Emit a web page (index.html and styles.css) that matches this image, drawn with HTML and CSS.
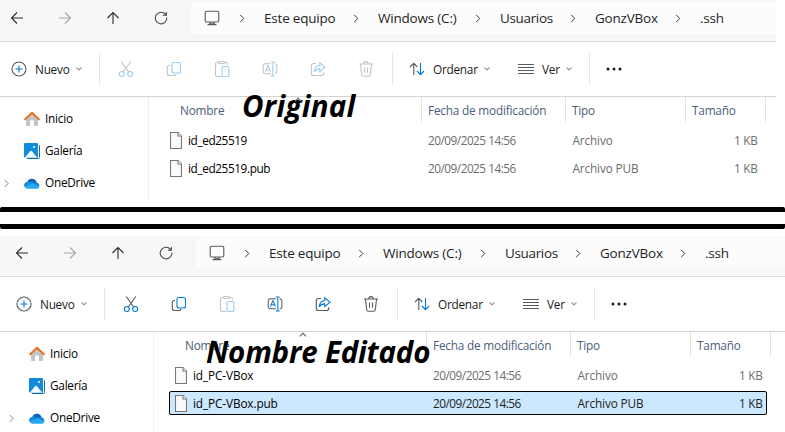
FILE: index.html
```
<!DOCTYPE html>
<html lang="es">
<head>
<meta charset="utf-8">
<title>Explorador</title>
<link rel="stylesheet" href="styles.css">
</head>
<body>
<svg class="defs" width="0" height="0">
  <symbol id="back" viewBox="0 0 16 16"><path d="M14 8H2.5M8 2.5 2.5 8 8 13.5"/></symbol>
  <symbol id="forward" viewBox="0 0 16 16"><path d="M2 8h11.5M8 2.5 13.500 8 8 13.500"/></symbol>
  <symbol id="up" viewBox="0 0 16 16"><path d="M8 14V2.500M2.500 8 8 2.500 13.500 8"/></symbol>
  <symbol id="reload" viewBox="0 0 16 16"><path d="M13.800 7.600A5.800 5.800 0 1 1 11.600 3.500L13.300 5M13.400 2v3.300H9.800"/></symbol>
  <symbol id="pc" viewBox="0 0 16 16"><rect x="1.200" y="1.200" width="13.600" height="10.800" rx="1.600"/><path d="M5.800 12v2.300M10.200 12v2.300M3.500 14.600h9M5.800 13.300h4.400"/></symbol>
  <symbol id="chev" viewBox="0 0 6 10"><path d="M1 1l4 4-4 4"/></symbol>
  <symbol id="down" viewBox="0 0 6 4"><path d="M.5.5 3 3 5.500.5"/></symbol>
  <symbol id="new" viewBox="0 0 16 16"><circle cx="8" cy="8" r="7"/><path class="c2" d="M8 4.500v7M4.500 8h7"/></symbol>
  <symbol id="cut" viewBox="0 0 16 18"><path d="M3.300 1.500 10.600 12M12.700 1.500 5.400 12"/><circle class="c2" cx="3.800" cy="14" r="2.500"/><circle class="c2" cx="12.200" cy="14" r="2.500"/></symbol>
  <symbol id="copy" viewBox="0 0 16 16"><path d="M4 4.500H3.300A2 2 0 0 0 1.300 6.500v6a2 2 0 0 0 2 2H8a2 2 0 0 0 2-1.700"/><rect class="c2" x="6" y="1.500" width="8.500" height="10.500" rx="2"/></symbol>
  <symbol id="paste" viewBox="0 0 16 18"><path d="M7 16.500H3a1.500 1.500 0 0 1-1.500-1.500V4A1.500 1.500 0 0 1 3 2.500h1.500M10.500 2.500H12A1.500 1.500 0 0 1 13.500 4v.8"/><rect x="4.500" y="1.500" width="6" height="2" rx="1"/><rect class="c2" x="8" y="6.500" width="6.800" height="10" rx="1.300"/></symbol>
  <symbol id="rename" viewBox="0 0 17 17"><path d="M9.500 3H3.500a2.200 2.200 0 0 0-2.200 2.200v6.100a2.200 2.200 0 0 0 2.200 2.200h6M13.500 3a2.200 2.200 0 0 1 2.300 2.200v6.100a2.200 2.200 0 0 1-2.300 2.200"/><path class="c2" d="M11.500 1v15M9.500 1h4M9.500 16h4M3.600 11.300l2.700-6.500L9 11.300M4.600 9.300H8"/></symbol>
  <symbol id="share" viewBox="0 0 16 16"><path d="M6 2.500H3.300a2 2 0 0 0-2 2v8a2 2 0 0 0 2 2h8.400a2 2 0 0 0 2-2v-1.300"/><path class="c2" d="M9.800 1.800v2.700C6.500 4.700 4.700 7 4.200 10.700 5.600 8.600 7.500 7.900 9.800 7.900v2.700L15 6.200z"/></symbol>
  <symbol id="trash" viewBox="0 0 16 17"><path d="M1 3.500h14M5.800 3.300a2.200 2.200 0 0 1 4.400 0M2.500 3.700l1.200 10.600a1.700 1.700 0 0 0 1.700 1.500h5.200a1.700 1.700 0 0 0 1.700-1.500L13.500 3.700M6.500 7v5.300M9.500 7v5.300"/></symbol>
  <symbol id="sort" viewBox="0 0 16 14"><path d="M4.800 13V1.500M1 5l3.800-3.700L8.300 5"/><path class="c2" d="M11.500 1v11.500M8 9l3.500 3.700L15 9"/></symbol>
  <symbol id="view" viewBox="0 0 16 12"><path d="M0 1.500h16M0 4.500h16M0 7.500h16M0 10.500h16"/></symbol>
  <symbol id="dots" viewBox="0 0 16 4"><g class="dot"><circle cx="2" cy="2" r="1.500"/><circle cx="8" cy="2" r="1.500"/><circle cx="14" cy="2" r="1.500"/></g></symbol>
  <symbol id="file" viewBox="0 0 12 17"><path fill="#fafafa" stroke="#777" d="M.5.5h7.500l3.500 3.500v12.500H.5z"/><path fill="#fff" stroke="#777" d="M8 .5V4h3.500"/></symbol>
  <symbol id="home" viewBox="0 0 16 16"><path fill="#c4c4c6" stroke="none" d="M2 7.500 8 2l6 5.500V14a1 1 0 0 1-1 1h-3V9.500H6V15H3a1 1 0 0 1-1-1z"/><path fill="none" stroke="#e8701d" stroke-width="2" stroke-linecap="round" stroke-linejoin="round" d="M1.200 8.200 8 1.700l6.800 6.500"/></symbol>
  <symbol id="gallery" viewBox="0 0 16 16"><path fill="#0a67b5" stroke="none" d="M13.500 2H15a1 1 0 0 1 1 1v10.500A2.500 2.500 0 0 1 13.500 16H4a1.500 1.500 0 0 1-1.400-1H13.500z"/><rect fill="#118bdc" stroke="none" width="14" height="14.500" rx="1.200"/><path fill="#f4faff" stroke="none" d="M1 14.500 6 8.300a1.300 1.300 0 0 1 2 0l5 6.200z"/><rect fill="#fff" stroke="none" x="9" y="3" width="2" height="2" rx="1"/><path stroke="#fff" d="M14.500 1.500V15"/></symbol>
  <symbol id="cloud" viewBox="0 0 16 11"><path fill="#0b63b8" stroke="none" d="M3.300 4A5 5 0 0 1 12.500 3.700L8 8z"/><path fill="#168de2" stroke="none" d="M3.500 3.700A3.600 3.600 0 0 0 .5 9L10 5.500C8 4 6 3.200 3.500 3.700z"/><path fill="#0b7bd3" stroke="none" d="M8.500 5.500a4 4 0 0 1 7 2L12 9z"/><path fill="#27a8ef" stroke="none" d="M.6 9A3.600 3.600 0 0 0 3.700 10.800h9A3.200 3.200 0 0 0 15.600 8.500L9.500 5z"/></symbol>
</svg>

<section class="window first">
  <nav class="nav">
    <svg class="i16"><use href="#back"/></svg><svg class="i16 faint"><use href="#forward"/></svg><svg class="i16"><use href="#up"/></svg><svg class="i16 soft"><use href="#reload"/></svg>
    <div class="address">
      <svg class="pc"><use href="#pc"/></svg><svg class="chev"><use href="#chev"/></svg>
      <span class="crumb c-pc">Este equipo</span><svg class="chev"><use href="#chev"/></svg>
      <span class="crumb c-drive">Windows (C:)</span><svg class="chev"><use href="#chev"/></svg>
      <span class="crumb c-users">Usuarios</span><svg class="chev"><use href="#chev"/></svg>
      <span class="crumb c-user">GonzVBox</span><svg class="chev"><use href="#chev"/></svg>
      <span class="crumb">.ssh</span>
    </div>
  </nav>
  <div class="toolbar">
    <div class="cmd new"><svg class="i16"><use href="#new"/></svg><span>Nuevo</span><svg class="down"><use href="#down"/></svg></div>
    <div class="actions">
      <svg class="off"><use href="#cut"/></svg><svg class="off"><use href="#copy"/></svg><svg class="off"><use href="#paste"/></svg><svg class="off"><use href="#rename"/></svg><svg class="off"><use href="#share"/></svg><svg class="off"><use href="#trash"/></svg>
    </div>
    <div class="cmd sort"><svg class="i16"><use href="#sort"/></svg><span>Ordenar</span><svg class="down"><use href="#down"/></svg></div>
    <div class="cmd view"><svg class="i16"><use href="#view"/></svg><span>Ver</span><svg class="down"><use href="#down"/></svg></div>
    <svg class="more"><use href="#dots"/></svg>
  </div>
  <div class="content">
    <aside class="side">
      <div><i></i><svg class="i16"><use href="#home"/></svg>Inicio</div>
      <div><i></i><svg class="i16"><use href="#gallery"/></svg>Galería</div>
      <div><svg class="expand"><use href="#chev"/></svg><svg class="cloud"><use href="#cloud"/></svg>OneDrive</div>
    </aside>
    <div class="files">
      <div class="head"><span class="name">Nombre</span><span>Fecha de modificación</span><span>Tipo</span><span>Tamaño</span></div>
      <div class="row"><svg class="file"><use href="#file"/></svg><span class="fname">id_ed25519</span><span class="date">20/09/2025 14:56</span><span class="type">Archivo</span><span class="size">1 KB</span></div>
      <div class="row"><svg class="file"><use href="#file"/></svg><span class="fname">id_ed25519.pub</span><span class="date">20/09/2025 14:56</span><span class="type">Archivo PUB</span><span class="size">1 KB</span></div>
    </div>
  </div>
  <div class="label original">Original</div>
  <svg class="caret"><use href="#down"/></svg>
</section>

<div class="rules"></div>

<section class="window second">
  <nav class="nav">
    <svg class="i16"><use href="#back"/></svg><svg class="i16 faint"><use href="#forward"/></svg><svg class="i16"><use href="#up"/></svg><svg class="i16 soft"><use href="#reload"/></svg>
    <div class="address">
      <svg class="pc"><use href="#pc"/></svg><svg class="chev"><use href="#chev"/></svg>
      <span class="crumb c-pc">Este equipo</span><svg class="chev"><use href="#chev"/></svg>
      <span class="crumb c-drive">Windows (C:)</span><svg class="chev"><use href="#chev"/></svg>
      <span class="crumb c-users">Usuarios</span><svg class="chev"><use href="#chev"/></svg>
      <span class="crumb c-user">GonzVBox</span><svg class="chev"><use href="#chev"/></svg>
      <span class="crumb">.ssh</span>
    </div>
  </nav>
  <div class="toolbar">
    <div class="cmd new"><svg class="i16"><use href="#new"/></svg><span>Nuevo</span><svg class="down"><use href="#down"/></svg></div>
    <div class="actions">
      <svg><use href="#cut"/></svg><svg><use href="#copy"/></svg><svg class="off"><use href="#paste"/></svg><svg><use href="#rename"/></svg><svg><use href="#share"/></svg><svg><use href="#trash"/></svg>
    </div>
    <div class="cmd sort"><svg class="i16"><use href="#sort"/></svg><span>Ordenar</span><svg class="down"><use href="#down"/></svg></div>
    <div class="cmd view"><svg class="i16"><use href="#view"/></svg><span>Ver</span><svg class="down"><use href="#down"/></svg></div>
    <svg class="more"><use href="#dots"/></svg>
  </div>
  <div class="content">
    <aside class="side">
      <div><i></i><svg class="i16"><use href="#home"/></svg>Inicio</div>
      <div><i></i><svg class="i16"><use href="#gallery"/></svg>Galería</div>
      <div><svg class="expand"><use href="#chev"/></svg><svg class="cloud"><use href="#cloud"/></svg>OneDrive</div>
    </aside>
    <div class="files">
      <div class="head"><span class="name">Nombre</span><span>Fecha de modificación</span><span>Tipo</span><span>Tamaño</span></div>
      <div class="row"><svg class="file"><use href="#file"/></svg><span class="fname">id_PC-VBox</span><span class="date">20/09/2025 14:56</span><span class="type">Archivo</span><span class="size">1 KB</span></div>
      <div class="row selected"><svg class="file"><use href="#file"/></svg><span class="fname">id_PC-VBox.pub</span><span class="date">20/09/2025 14:56</span><span class="type">Archivo PUB</span><span class="size">1 KB</span></div>
    </div>
  </div>
  <svg class="caret"><use href="#down"/></svg>
  <div class="label edited">Nombre Editado</div>
</section>
</body>
</html>
```
FILE: styles.css
```
* { box-sizing: border-box; }
body {
  margin: 0;
  width: 785px;
  height: 432px;
  overflow: hidden;
  background: #fff;
  font: 11.8px/16px "Open Sans", "Noto Sans", sans-serif;
  color: #000;
}
.defs { position: absolute; }
svg {
  flex: none;
  fill: none;
  stroke: var(--ink, #5a5a5a);
  stroke-width: 1.1;
  overflow: visible;
}
.c2 { stroke: var(--accent, #0078d4); }
.dot { fill: #1b1b1b; stroke: none; }
.off { --ink: #c3c3c3; --accent: #9dcdf0; }
.i16 { width: 16px; height: 16px; }

.window { position: relative; }
.first { width: 776px; height: 207px; }
.second { height: 196px; }
.second .nav, .second .toolbar, .second .content { padding-left: 5px; }

/* Navigation and address */
.nav {
  display: flex;
  align-items: center;
  height: 42px;
  background: #f7f7f7;
  border-bottom: 1px solid #dadada;
}
.second .nav { height: 41px; }
.nav > svg { --ink: #2b2b2b; margin: 0 23px 6px 9px; }
.nav > svg.faint { --ink: #a6a6a6; }
.nav > svg.soft { --ink: #4a4a4a; }
.first .nav > svg { margin-bottom: 5px; }
.address {
  flex: 1;
  align-self: flex-start;
  display: flex;
  align-items: center;
  height: 32px;
  margin-top: 2px;
  margin-left: -1px;
  padding-left: 13px;
  background: #fcfcfc;
  border-radius: 5px 0 0 5px;
  font-size: 13.5px;
  letter-spacing: -.2px;
  color: #1f1f1f;
}
.second .address { margin-top: 1px; }
.pc { width: 16px; height: 16px; margin-right: 19px; }
.chev { --ink: #333; width: 6px; height: 9px; margin-right: 19px; }
.crumb { white-space: nowrap; }
.c-pc { width: 89px; }
.c-drive { width: 97px; }
.c-users { width: 70px; letter-spacing: -.35px; }
.c-user { width: 80px; }

/* Command bar */
.toolbar {
  display: flex;
  align-items: center;
  height: 55px;
  padding-bottom: 1px;
  border-bottom: 1px solid #d4d4d4;
}
.cmd {
  display: flex;
  align-items: center;
  height: 32px;
  border-right: 1px solid #e5e5e5;
  color: #1b1b1b;
  letter-spacing: -.25px;
}
.cmd span { flex: 1; margin-left: 8px; }
.down { --ink: #999; width: 6px; height: 4px; }
.new { width: 100px; padding: 0 17px 0 11px; }
.actions {
  display: flex;
  width: 293px;
  height: 32px;
  align-items: center;
  gap: 32px;
  padding-left: 18px;
  border-right: 1px solid #e5e5e5;
}
.actions svg { width: 16px; height: 18px; }
.sort { width: 109px; padding: 0 12px 0 16px; border: 0; }
.view { width: 88px; padding: 0 17px 0 16px; }
.more { width: 16px; height: 4px; margin-left: 16px; }

/* Sidebar and file list */
.content { display: flex; height: 103px; }
.side { width: 149px; border-right: 1px solid #f0f0f0; padding-top: 6px; letter-spacing: -.25px; }
.side > div { display: flex; align-items: center; height: 32px; padding-bottom: 2px; }
.side i { width: 24px; }
.side svg { margin: 2px 5px 0 0; }
.side .expand { --ink: #777; width: 5px; height: 9px; margin: 2px 15px 0 4px; }
.side .cloud { width: 16px; height: 11px; }
.files { width: 617px; padding-left: 15px; }
.head {
  display: grid;
  grid-template-columns: 258px 144px 120px 80px;
  height: 29px;
  color: #4c607a;
  letter-spacing: -.2px;
}
.head span { height: 25px; padding: 5px 0 0 6px; border-right: 1px solid #e2e2e2; white-space: nowrap; }
.head .name { padding-left: 16px; }
.row {
  display: grid;
  grid-template-columns: 18px 240px 144.500px 120px 65px;
  align-items: center;
  height: 28px;
  padding-left: 6px;
  color: #6d6d6d;
}
.file { width: 12px; height: 17px; }
.fname { color: #000; letter-spacing: -.4px; }
.second .fname { letter-spacing: -.12px; }
.date { letter-spacing: -.5px; }
.type { letter-spacing: -.15px; }
.size { text-align: right; letter-spacing: -.3px; }
.selected {
  height: 24px;
  margin: 2px 0 0;
  width: 598px;
  padding-left: 5px;
  background: #cce8ff;
  border: 1px solid #000;
  border-radius: 2px;
  color: #222;
}

/* Annotations drawn over the windows */
.label {
  position: absolute;
  font: italic 700 29.500px/36px "Open Sans", "Noto Sans", sans-serif;
  white-space: nowrap;
}
.original { left: 242px; top: 88px; letter-spacing: .25px; }
.edited { left: 206px; top: 98px; letter-spacing: -.2px; }
.caret { --ink: #777; position: absolute; width: 8px; height: 5px; left: 294px; top: 97px; transform: scaleY(-1); }
.second .caret { left: 299px; top: 96px; }
.rules { height: 22px; border: solid #000; border-width: 5px 0; margin-bottom: 7px; border-radius: 2px; }
```
